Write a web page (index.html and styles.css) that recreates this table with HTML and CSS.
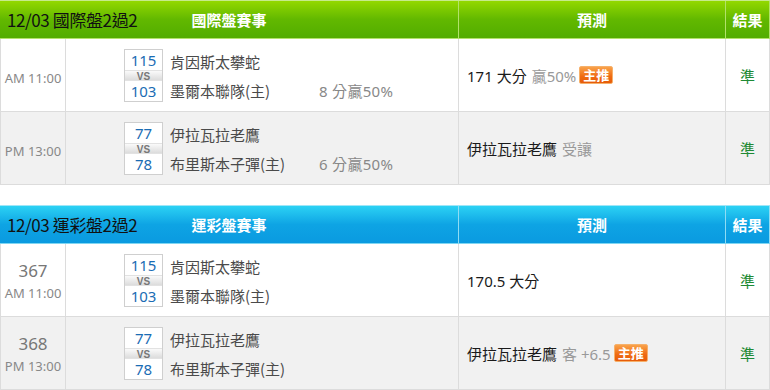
FILE: index.html
```html
<!DOCTYPE html>
<html lang="zh-Hant">
<head>
<meta charset="utf-8">
<title>預測</title>
<link rel="stylesheet" href="styles.css">
</head>
<body>
<section class="board board-green">
  <div class="head">
    <div class="hcell hmerge"><span class="htitle">12/03 國際盤2過2</span><span class="hlabel">國際盤賽事</span><span></span></div>
    <div class="hcell">預測</div>
    <div class="hcell">結果</div>
  </div>
  <div class="row">
    <div class="cell ctime"><span class="time">AM 11:00</span></div>
    <div class="cell cmatch">
      <div class="score"><span class="num">115</span><span class="vs">VS</span><span class="num">103</span></div>
      <div class="names"><span class="team">肯因斯太攀蛇</span><span class="team">墨爾本聯隊(主)</span></div>
      <div class="hcp"><span></span><span>8 分贏50%</span></div>
    </div>
    <div class="cell cpred"><span class="pmain">171 大分</span><span class="psub">贏50%</span><span class="badge">主推</span></div>
    <div class="cell cres">準</div>
  </div>
  <div class="row alt">
    <div class="cell ctime"><span class="time">PM 13:00</span></div>
    <div class="cell cmatch">
      <div class="score"><span class="num">77</span><span class="vs">VS</span><span class="num">78</span></div>
      <div class="names"><span class="team">伊拉瓦拉老鷹</span><span class="team">布里斯本子彈(主)</span></div>
      <div class="hcp"><span></span><span>6 分贏50%</span></div>
    </div>
    <div class="cell cpred"><span class="pmain">伊拉瓦拉老鷹</span><span class="psub">受讓</span></div>
    <div class="cell cres">準</div>
  </div>
</section>

<section class="board board-blue">
  <div class="head">
    <div class="hcell hmerge"><span class="htitle">12/03 運彩盤2過2</span><span class="hlabel">運彩盤賽事</span><span></span></div>
    <div class="hcell">預測</div>
    <div class="hcell">結果</div>
  </div>
  <div class="row">
    <div class="cell ctime"><span class="gno">367</span><span class="time">AM 11:00</span></div>
    <div class="cell cmatch">
      <div class="score"><span class="num">115</span><span class="vs">VS</span><span class="num">103</span></div>
      <div class="names"><span class="team">肯因斯太攀蛇</span><span class="team">墨爾本聯隊(主)</span></div>
    </div>
    <div class="cell cpred"><span class="pmain">170.5 大分</span></div>
    <div class="cell cres">準</div>
  </div>
  <div class="row alt">
    <div class="cell ctime"><span class="gno">368</span><span class="time">PM 13:00</span></div>
    <div class="cell cmatch">
      <div class="score"><span class="num">77</span><span class="vs">VS</span><span class="num">78</span></div>
      <div class="names"><span class="team">伊拉瓦拉老鷹</span><span class="team">布里斯本子彈(主)</span></div>
    </div>
    <div class="cell cpred"><span class="pmain">伊拉瓦拉老鷹</span><span class="psub">客 +6.5</span><span class="badge">主推</span></div>
    <div class="cell cres">準</div>
  </div>
</section>
</body>
</html>
```
FILE: styles.css
```css
* { box-sizing: border-box; }
html, body { margin: 0; padding: 0; background: #fff; }
body {
  width: 770px;
  font-family: "Noto Sans", "Noto Sans CJK TC", sans-serif;
  font-size: 15px;
  color: #333;
}
.board { width: 770px; }
.board-blue { margin-top: 20px; }

.head {
  display: grid;
  grid-template-columns: 459px 267px 44px;
  height: 39px;
  border-bottom: 1px solid #b2e26a;
}
.board-green .head {
  background: linear-gradient(#93d800, #62b800 50%, #52ad00);
  border-top: 1px solid #c6ea8c;
}
.board-blue .head {
  background: linear-gradient(#2cd2f4, #0ea4e4 50%, #0a9ae0);
  border-top: 1px solid #9fe6f8;
  border-bottom-color: #7fd6f2;
}
.hcell {
  display: flex;
  align-items: center;
  justify-content: center;
  color: #fff;
  font-weight: bold;
  font-size: 15px;
  border-right: 1px solid #b2e26a;
  font-family: "Noto Sans CJK TC", sans-serif;
}
.board-blue .hcell { border-right-color: #8fdcf4; }
.hmerge {
  display: grid;
  grid-template-columns: 1fr auto 1fr;
  align-items: center;
  justify-content: stretch;
}
.htitle {
  color: #111;
  font-weight: normal;
  font-size: 17px;
  padding-left: 7px;
  letter-spacing: -0.4px;
}
.hlabel { letter-spacing: 0; }

.row {
  display: grid;
  grid-template-columns: 65px 393px 267px 44px;
  height: 73px;
  border-left: 1px solid #dcdcdc;
  background: #fff;
}
.row.alt { background: #f1f1f1; }
.cell {
  border-right: 1px solid #dcdcdc;
  border-bottom: 1px solid #dcdcdc;
  display: flex;
  align-items: center;
}
.ctime {
  flex-direction: column;
  justify-content: center;
  color: #888;
  gap: 6px;
  padding-top: 6px;
}
.board-blue .ctime { padding-top: 0; gap: 3px; }
.time { font-size: 13px; line-height: 16px; }
.gno { font-size: 17px; line-height: 22px; color: #777; }

.cmatch { padding-left: 58px; }
.score {
  display: flex;
  flex-direction: column;
  width: 39px;
  border: 1px solid #cfcfcf;
  background: #fff;
}
.num {
  height: 20px;
  line-height: 20px;
  text-align: center;
  color: #1a6cb4;
  font-size: 15px;
}
.vs {
  height: 11px;
  line-height: 11px;
  text-align: center;
  font-size: 10px;
  font-weight: bold;
  color: #777;
  font-family: "Liberation Sans", sans-serif;
  background: linear-gradient(#fafafa, #dcdcdc);
  border-top: 1px solid #e2e2e2;
  border-bottom: 1px solid #e2e2e2;
}
.names, .hcp {
  display: flex;
  flex-direction: column;
  justify-content: space-between;
  height: 51px;
  padding: 2px 0 0;
}
.names { width: 156px; padding-left: 7px; }
.team, .hcp span {
  line-height: 20px;
  height: 20px;
  color: #4a4a4a;
  font-size: 15px;
  font-family: "Noto Sans CJK TC", sans-serif;
}
.hcp span { color: #888; font-family: "Noto Sans", "Noto Sans CJK TC", sans-serif; letter-spacing: 0.3px; }

.cpred { padding-left: 8px; gap: 5px; }
.pmain { color: #1a1a1a; font-size: 15px; }
.psub { color: #999; font-size: 15px; }
.badge {
  display: inline-block;
  height: 18px;
  line-height: 16px;
  padding: 0 3px;
  margin-left: -2px;
  font-size: 13px;
  font-weight: bold;
  color: #fff;
  background: linear-gradient(#f9a24a, #ef6a12 60%, #e55c0a);
  border: 1px solid #f6b06a;
  border-radius: 2px;
  font-family: "Noto Sans CJK TC", sans-serif;
}
.cres {
  justify-content: center;
  color: #1e8a34;
  font-size: 15px;
  font-family: "Noto Sans CJK TC", sans-serif;
}
```
